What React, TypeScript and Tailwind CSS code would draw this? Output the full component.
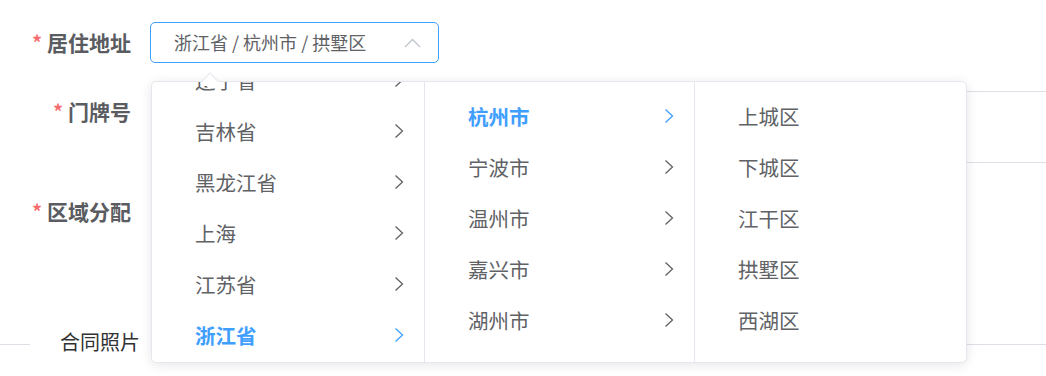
import React from "react";

const provinces = ["北京", "天津", "河北省", "山西省", "内蒙古", "辽宁省", "吉林省", "黑龙江省", "上海", "江苏省", "浙江省", "安徽省"];
const cities = ["杭州市", "宁波市", "温州市", "嘉兴市", "湖州市", "绍兴市", "金华市"];
const districts = ["上城区", "下城区", "江干区", "拱墅区", "西湖区", "滨江区", "萧山区"];

function Chevron({ active }: { active?: boolean }) {
  return (
    <svg width="10" height="16" viewBox="0 0 10 16" className={active ? "text-[#409eff]" : "text-[#606266]"}>
      <path d="M1.5 1.5 L8.5 8 L1.5 14.5" fill="none" stroke="currentColor" strokeWidth="1.3" />
    </svg>
  );
}

function Item({ label, active, arrow }: { label: string; active?: boolean; arrow?: boolean }) {
  return (
    <div
      className={
        "h-[51px] shrink-0 flex items-center justify-between pl-[43px] pr-[20px] text-[20.5px] leading-[28px] " +
        (active ? "text-[#409eff] font-bold" : "text-[#606266]")
      }
    >
      <span>{label}</span>
      {arrow ? <Chevron active={active} /> : null}
    </div>
  );
}

function Label({ text }: { text: string }) {
  return (
    <div className="w-[131px] h-[41px] shrink-0 flex items-center justify-end text-[21px] font-bold text-[#5a5c61] whitespace-nowrap">
      <span className="text-[#f56c6c] text-[19px] mr-[5px] font-bold">*</span>
      <span>{text}</span>
    </div>
  );
}

export default function App() {
  return (
    <div className="relative w-[1046px] h-[376px] overflow-hidden bg-white font-['Noto_Sans_CJK_SC','Noto_Sans',sans-serif]">
      <div className="flex flex-col pt-[22px]">
        <div className="flex items-center">
          <Label text="居住地址" />
          <div className="ml-[19px] w-[289px] h-[41px] shrink-0 border border-[#409eff] rounded-[5px] flex items-center justify-between pl-[23px] pr-[17px]">
            <span className="text-[18px] text-[#606266]">浙江省 / 杭州市 / 拱墅区</span>
            <svg width="17" height="10" viewBox="0 0 17 10">
              <path d="M1 9 L8.5 1.5 L16 9" fill="none" stroke="#c0c4cc" strokeWidth="1.3" />
            </svg>
          </div>
        </div>
        <div className="flex items-start mt-[28px]">
          <Label text="门牌号" />
          <div className="ml-[22px] w-[1000px] h-[72px] shrink-0 border border-[#dcdfe6] rounded-[5px]" />
        </div>
        <div className="flex items-start mt-[28px]">
          <Label text="区域分配" />
        </div>
        <div className="flex items-center mt-[98px]">
          <div className="w-[30px] h-px bg-[#dcdfe6]" />
          <span className="px-[30px] text-[20px] leading-[28px] text-[#303133] -translate-y-[2px]">合同照片</span>
          <div className="flex-1 h-px bg-[#dcdfe6]" />
        </div>
      </div>

      <div className="absolute left-[151px] top-[81px] w-[816px] h-[282px] bg-white border border-[#e4e7ed] rounded-[5px] shadow-[0_2px_12px_rgba(0,0,0,0.1)] flex overflow-hidden">
        <div className="w-[273px] h-full border-r border-[#e4e7ed] overflow-hidden">
          <div className="flex flex-col pt-[8px] mt-[-291px]">
            {provinces.map((p) => (
              <Item key={p} label={p} arrow active={p === "浙江省"} />
            ))}
          </div>
        </div>
        <div className="w-[270px] h-full border-r border-[#e4e7ed] overflow-hidden">
          <div className="flex flex-col pt-[8px]">
            {cities.map((c) => (
              <Item key={c} label={c} arrow active={c === "杭州市"} />
            ))}
          </div>
        </div>
        <div className="flex-1 h-full overflow-hidden">
          <div className="flex flex-col pt-[8px]">
            {districts.map((d) => (
              <Item key={d} label={d} />
            ))}
          </div>
        </div>
      </div>
      <div className="absolute left-[204px] top-[75px] w-[12px] h-[12px] rotate-45 bg-white border-l border-t border-[#e4e7ed]" />
    </div>
  );
}
